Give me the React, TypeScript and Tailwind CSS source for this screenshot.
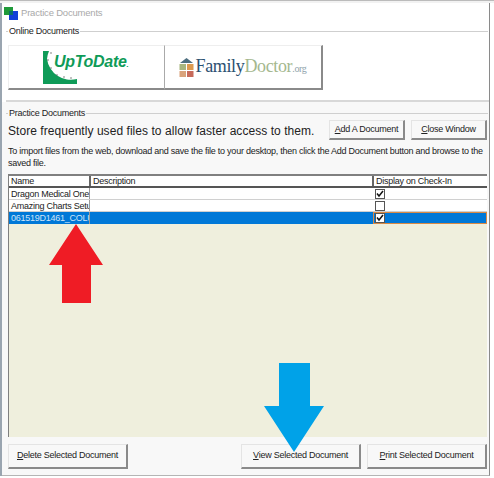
const ui = { fontFamily: '"Liberation Sans", Arial, sans-serif' };

function WinButton({ label, hot, className }: { label: string; hot: string; className: string }) {
  const rest = label.slice(hot.length);
  return (
    <div
      className={`flex items-center justify-center bg-[#f8f8f8] border-t border-l border-[#e4e4e4] border-r-2 border-b-2 border-r-[#8a8a8a] border-b-[#8a8a8a] text-[9px] tracking-[-0.25px] text-[#222] whitespace-nowrap ${className}`}
    >
      <span>
        <span className="underline">{hot}</span>
        {rest}
      </span>
    </div>
  );
}

function GroupTitle({ title }: { title: string }) {
  return (
    <div className="flex items-center h-3 text-[9px] tracking-[-0.25px] leading-3 text-[#222]">
      <div className="w-[2px] h-[1px] bg-[#cfcfcf] mr-[1px] shrink-0" />
      <span className="shrink-0">{title}</span>
      <div className="flex-1 h-[1px] bg-[#cfcfcf] ml-[1px]" />
    </div>
  );
}

function Check({ on }: { on: boolean }) {
  return (
    <div className="w-[10px] h-[10px] bg-white border border-[#555] flex items-center justify-center">
      {on && (
        <svg width="8" height="8" viewBox="0 0 8 8">
          <path d="M1 3.5 L3 6 L7 1" fill="none" stroke="#111" strokeWidth="1.5" />
        </svg>
      )}
    </div>
  );
}

function Row({ name, on, selected }: { name: string; on: boolean; selected?: boolean }) {
  return (
    <div className={`flex h-3 text-[9px] tracking-[-0.25px] leading-3 ${selected ? 'bg-[#0078d7] text-[#cfe4f7]' : 'bg-white text-[#222] border-b border-[#d0d0d0]'}`}>
      <div className="w-[81px] pl-[2px] overflow-hidden whitespace-nowrap shrink-0 border-r border-[#9a9a9a]">{name}</div>
      <div className="w-[283px] shrink-0" />
      <div className={`flex-1 pl-[2px] flex items-center ${selected ? 'outline outline-1 -outline-offset-1 outline-[#d98a45]' : ''}`}>
        <Check on={on} />
      </div>
    </div>
  );
}

function HeaderCell({ label, className }: { label: string; className: string }) {
  return (
    <div className={`h-[10px] pl-[2px] text-[9px] tracking-[-0.25px] leading-[10px] text-[#222] bg-white overflow-hidden whitespace-nowrap ${className}`}>
      {label}
    </div>
  );
}

function UpToDateLogo() {
  return (
    <div className="flex items-start w-[87px]">
      <svg width="34" height="33" viewBox="0 0 34 33" className="shrink-0">
        <path d="M0 0 H6 A27 27 0 0 0 4 8 A24 24 0 0 0 34 28 V33 H0 Z" fill="#0f9b58" />
        <g fill="#555">
          <circle cx="8" cy="2" r="0.7" />
          <circle cx="5" cy="9" r="0.7" />
          <circle cx="8" cy="17" r="0.7" />
          <circle cx="14" cy="24" r="0.7" />
          <circle cx="21" cy="26" r="0.7" />
          <circle cx="28" cy="27" r="0.7" />
        </g>
      </svg>
      <span className="text-[16px] leading-5 font-bold italic text-[#0f9b58] tracking-[-0.3px] -ml-[23px] mt-[1px] whitespace-nowrap">
        UpToDate<span className="text-[8px]">.</span>
      </span>
    </div>
  );
}

function FamilyDoctorLogo() {
  return (
    <div className="flex items-center">
      <svg width="15" height="19" viewBox="0 0 15 19" className="shrink-0 mr-[1px]">
        <path d="M1 5 L7.5 0 L14 5 Z" fill="#4e6f80" />
        <rect x="0.5" y="6" width="6.5" height="6" fill="#a8b67f" />
        <rect x="8" y="6" width="6.5" height="6" fill="#dd9a4f" />
        <rect x="0.5" y="13" width="6.5" height="6" fill="#d9a27a" />
        <rect x="8" y="13" width="6.5" height="6" fill="#c76a5a" />
      </svg>
      <span className="text-[18px] leading-5 tracking-[-0.35px] text-[#2c5070] whitespace-nowrap" style={{ fontFamily: '"Liberation Serif", serif' }}>
        Family<span className="text-[#a5b88e]">Doctor</span>
        <span className="text-[10px] text-[#8fa3ac]">.org</span>
      </span>
    </div>
  );
}

export default function App() {
  return (
    <div className="relative w-[494px] h-[478px] overflow-hidden bg-white" style={ui}>
      <div className="h-[3px] bg-[#f2f2f2] border-t border-[#bbb]" />
      <div className="flex h-[473px] border-l-[2px] border-[#9aa5b0]">
        <div className="w-[488px] border-r border-[#8a8a8a] border-b border-b-[#b5b5b5] flex flex-col">
          <div className="h-[19px] flex items-center pl-[2px] gap-[3px] bg-white pt-[2px]">
            <svg width="14" height="13" viewBox="0 0 14 13" className="shrink-0">
              <rect x="0" y="0" width="9" height="8" fill="#1f9a3a" />
              <rect x="5" y="4" width="9" height="9" fill="#1240d8" />
              <rect x="5" y="4" width="4" height="4" fill="#0a6f6a" />
            </svg>
            <span className="text-[9.5px] tracking-[-0.2px] text-[#a9a9a9]">Practice Documents</span>
          </div>
          <div className="bg-white pl-[4px] pr-[1px] pt-[3px] h-[78px]">
            <GroupTitle title="Online Documents" />
            <div className="flex ml-[2px] mt-[8px]">
              <div className="w-[157px] h-[45px] flex items-center justify-center border-t border-l border-[#eee] border-b-2 border-b-[#8a8a8a] border-r border-r-[#aaa]">
                <UpToDateLogo />
              </div>
              <div className="w-[158px] h-[45px] flex items-center justify-center border-t border-[#eee] border-b-2 border-b-[#8a8a8a] border-r-2 border-r-[#8a8a8a]">
                <FamilyDoctorLogo />
              </div>
            </div>
          </div>
          <div className="h-[2px] bg-[#d8d8d8] ml-[4px]" />
          <div className="flex-1 bg-[#f8f8f8] pl-[4px] pr-[1px] pt-[5px] flex flex-col">
            <GroupTitle title="Practice Documents" />
            <div className="flex items-start mt-[1px] pl-[2px]">
              <div className="w-[321px] text-[12px] leading-4 mt-[3px] tracking-[0.05px] text-[#222] whitespace-nowrap">
                Store frequently used files to allow faster access to them.
              </div>
              <WinButton label="Add A Document" hot="A" className="w-[76px] h-[20px]" />
              <WinButton label="Close Window" hot="C" className="w-[76px] h-[20px] ml-[6px]" />
            </div>
            <div className="text-[9px] tracking-[-0.25px] leading-[12px] mt-[5px] pl-[2px] pr-[2px] text-[#222]">
              To import files from the web, download and save the file to your desktop, then click the Add Document button and browse to the saved file.
            </div>
            <div className="ml-[2px] mr-[1px] mt-[5px] h-[263px] bg-[#efefdd] border-t-2 border-l border-[#808080] flex flex-col">
              <div className="flex border-b-2 border-[#555]">
                <HeaderCell label="Name" className="w-[82px] border-r-2 border-r-[#666]" />
                <HeaderCell label="Description" className="w-[283px] border-r-2 border-r-[#666]" />
                <HeaderCell label="Display on Check-In" className="flex-1" />
              </div>
              <Row name="Dragon Medical One" on />
              <Row name="Amazing Charts Setu" on={false} />
              <Row name="061519D1461_COLU" on selected />
            </div>
            <div className="flex mt-[7px] pl-[2px]">
              <WinButton label="Delete Selected Document" hot="D" className="w-[120px] h-[25px]" />
              <WinButton label="View Selected Document" hot="V" className="w-[120px] h-[25px] ml-[113px]" />
              <WinButton label="Print Selected Document" hot="P" className="w-[120px] h-[25px] ml-[6px]" />
            </div>
          </div>
        </div>
      </div>
      <svg width="56" height="80" viewBox="0 0 56 80" className="absolute left-[48px] top-[223px]">
        <path d="M28 1 L55 42 H43 V80 H14 V42 H1 Z" fill="#ef1c25" />
      </svg>
      <svg width="62" height="91" viewBox="0 0 62 91" className="absolute left-[263px] top-[362px]">
        <path d="M16 1 H47 V44 H61 L31 90 L1 44 H16 Z" fill="#00a2e8" />
      </svg>
    </div>
  );
}
